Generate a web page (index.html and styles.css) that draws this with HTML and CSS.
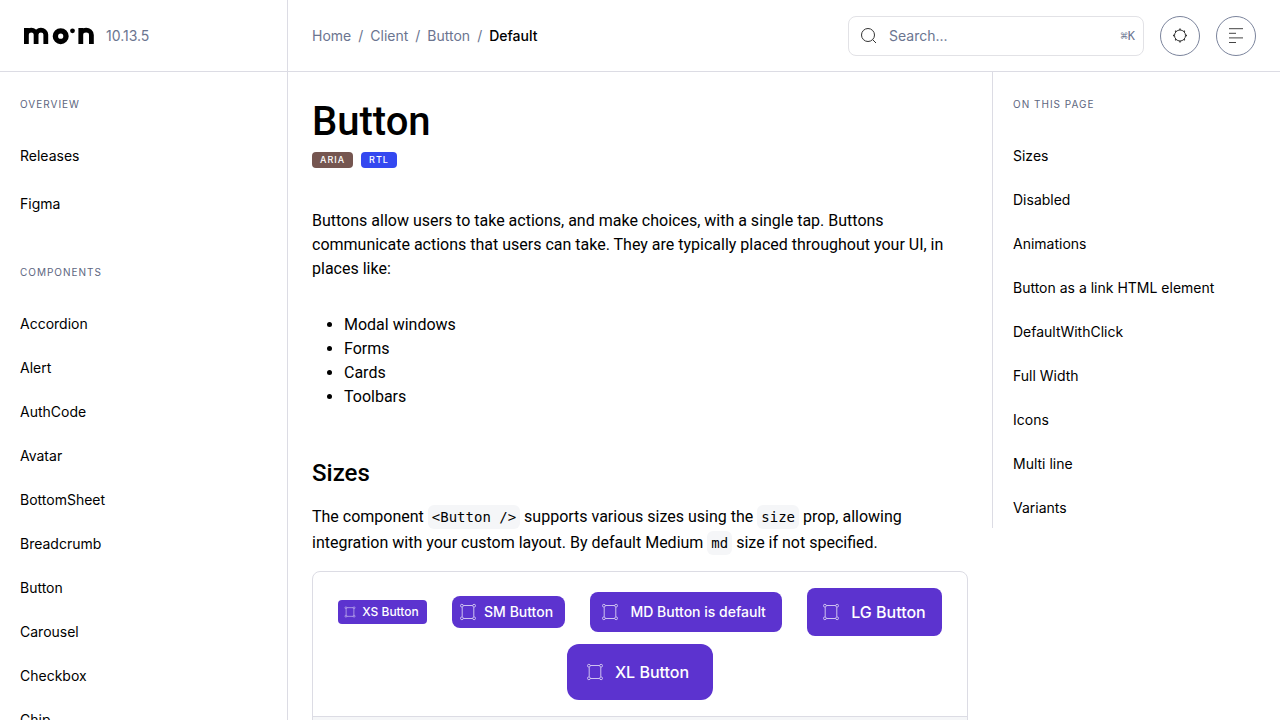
FILE: index.html
```html
<!DOCTYPE html>
<html lang="en">
<head>
<meta charset="utf-8">
<meta name="viewport" content="width=device-width, initial-scale=1">
<title>Button - Moon</title>
<link rel="stylesheet" href="styles.css">
</head>
<body>
<svg class="defs" aria-hidden="true">
  <symbol id="frame" viewBox="0 0 24 24" fill="none" stroke="currentColor">
    <path d="M7.200 5.500h9.600M7.200 18.500h9.600M6.200 7.200v9.600M17.800 7.200v9.600"/>
    <circle cx="5.900" cy="5.700" r="1.400"/><circle cx="18.100" cy="5.700" r="1.400"/>
    <circle cx="5.900" cy="18.300" r="1.400"/><circle cx="18.100" cy="18.300" r="1.400"/>
  </symbol>
</svg>
<div class="layout">
  <aside class="sidebar">
    <div class="brand">
      <svg class="logo" viewBox="0 0 70 18" role="img" aria-label="moon">
        <g fill="none" stroke="#000" stroke-width="4.800">
          <path d="M2.400 17V1M2.400 17V7.500a4.850 4.300 0 0 1 9.700 0V17M12.100 17V7.500a4.850 4.300 0 0 1 9.700 0V17"/>
          <circle cx="36.700" cy="9.200" r="5.300" stroke-width="5.400"/>
          <path d="M56.800 17V1M56.800 17V8a5.300 4.800 0 0 1 10.600 0V17"/>
        </g>
        <circle cx="48.500" cy="3.800" r="2.400"/>
      </svg>
      <span class="version">10.13.5</span>
    </div>
    <nav class="side-nav" aria-label="Components">
      <h2 class="label">Overview</h2>
      <ul class="links roomy">
        <li><a href="#">Releases</a></li>
        <li><a href="#">Figma</a></li>
      </ul>
      <h2 class="label">Components</h2>
      <ul class="links">
        <li><a href="#">Accordion</a></li>
        <li><a href="#">Alert</a></li>
        <li><a href="#">AuthCode</a></li>
        <li><a href="#">Avatar</a></li>
        <li><a href="#">BottomSheet</a></li>
        <li><a href="#">Breadcrumb</a></li>
        <li><a href="#">Button</a></li>
        <li><a href="#">Carousel</a></li>
        <li><a href="#">Checkbox</a></li>
        <li><a href="#">Chip</a></li>
      </ul>
    </nav>
  </aside>
  <div class="page">
    <header class="topbar">
      <nav class="crumbs" aria-label="Breadcrumb">
        <a href="#">Home</a><span>/</span><a href="#">Client</a><span>/</span><a href="#">Button</a><span>/</span><strong>Default</strong>
      </nav>
      <div class="tools">
        <label class="search">
          <svg viewBox="0 0 24 24" width="24" height="24" fill="none" stroke="#333" aria-hidden="true"><circle cx="11" cy="11" r="6.500"/><path d="M15.700 15.700l3.300 3.300"/></svg>
          <input type="search" placeholder="Search..." aria-label="Search">
          <kbd>⌘K</kbd>
        </label>
        <button class="round" type="button" aria-label="Switch theme">
          <svg viewBox="0 0 24 24" width="24" height="24" fill="none" stroke="#333" aria-hidden="true"><circle cx="12" cy="11.500" r="5.500"/><path stroke-width="1.400" d="M12 4.500V6M12 17v1.500M5 11.500h1.500M17.500 11.500H19M7.200 6.700l1 1M15.800 15.300l1 1M7.200 16.300l1-1M15.800 7.700l1-1"/></svg>
        </button>
        <button class="round" type="button" aria-label="Switch direction">
          <svg viewBox="0 0 24 24" width="24" height="24" fill="none" stroke="#444" aria-hidden="true"><path d="M5 4.700h14M5 9.300h7M5 13.900h14M5 18.500h7"/></svg>
        </button>
      </div>
    </header>
    <div class="columns">
      <main class="content">
        <h1>Button</h1>
        <div class="tags"><span class="tag brown">Aria</span><span class="tag blue">RTL</span></div>
        <p class="intro">Buttons allow users to take actions, and make choices, with a single tap. Buttons communicate actions that users can take. They are typically placed throughout your UI, in places like:</p>
        <ul class="bullets">
          <li>Modal windows</li>
          <li>Forms</li>
          <li>Cards</li>
          <li>Toolbars</li>
        </ul>
        <h2 class="section">Sizes</h2>
        <p class="text">The component <code>&lt;Button /&gt;</code> supports various sizes using the <code>size</code> prop, allowing integration with your custom layout. By default Medium <code>md</code> size if not specified.</p>
        <div class="card">
          <div class="demo">
            <button type="button" class="btn xs"><svg><use href="#frame"/></svg>XS Button</button>
            <button type="button" class="btn sm"><svg><use href="#frame"/></svg>SM Button</button>
            <button type="button" class="btn md"><svg><use href="#frame"/></svg>MD Button is default</button>
            <button type="button" class="btn lg"><svg><use href="#frame"/></svg>LG Button</button>
            <button type="button" class="btn xl"><svg><use href="#frame"/></svg>XL Button</button>
          </div>
          <div class="card-foot"></div>
        </div>
      </main>
      <aside class="toc">
        <h2 class="label">On this page</h2>
        <ul class="links">
          <li><a href="#">Sizes</a></li>
          <li><a href="#">Disabled</a></li>
          <li><a href="#">Animations</a></li>
          <li><a href="#">Button as a link HTML element</a></li>
          <li><a href="#">DefaultWithClick</a></li>
          <li><a href="#">Full Width</a></li>
          <li><a href="#">Icons</a></li>
          <li><a href="#">Multi line</a></li>
          <li><a href="#">Variants</a></li>
        </ul>
      </aside>
    </div>
  </div>
</div>
</body>
</html>
```

FILE: styles.css
```css
* { box-sizing: border-box; margin: 0; padding: 0; }
html { scrollbar-width: none; }
body { font-family: Inter, "Liberation Sans", sans-serif; font-size: 16px; line-height: 24px; color: #000; background: #fff; }
a { color: inherit; text-decoration: none; }
ul { list-style: none; }
button { font: inherit; cursor: pointer; }
.defs { display: none; }

.layout { display: flex; align-items: flex-start; }
.sidebar { position: sticky; top: 0; width: 288px; height: 100vh; flex: none; overflow-y: auto; scrollbar-width: none; border-right: 1px solid #dcdce4; }
.brand { display: flex; align-items: center; gap: 12px; height: 72px; padding: 0 24px; border-bottom: 1px solid #dcdce4; }
.logo { width: 70px; height: 18px; }
.version { font-size: 14px; color: #6b7590; }

.side-nav { padding: 20px 20px 0; }
.label { font-size: 10px; line-height: 24px; font-weight: 400; letter-spacing: 1px; text-transform: uppercase; color: #5d6680; }
.links { display: flex; flex-direction: column; gap: 4px; padding-top: 20px; }
.links a { display: block; padding: 8px 0; font-size: 14px; }
.roomy { gap: 0; padding: 16px 0 32px; }
.roomy a { padding: 12px 0; }

.page { flex: 1; min-width: 0; }
.topbar { display: flex; align-items: center; justify-content: space-between; height: 72px; padding: 0 24px; border-bottom: 1px solid #dcdce4; }
.crumbs { display: flex; gap: 7px; font-size: 14px; color: #6b7590; }
.crumbs strong { font-weight: 500; color: #000; }
.tools { display: flex; align-items: center; gap: 16px; }
.search { display: flex; align-items: center; gap: 8px; width: 296px; height: 40px; padding: 0 8px; border: 1px solid #e2e2e6; border-radius: 8px; }
.search input { flex: 1; min-width: 0; border: 0; outline: 0; background: none; font: inherit; font-size: 14px; }
.search input::placeholder { color: #6b7590; opacity: 1; }
.search kbd { font-family: "DejaVu Sans Mono", monospace; font-size: 12px; color: #6b7590; }
.round { display: flex; align-items: center; justify-content: center; width: 40px; height: 40px; border: 1px solid #7b849c; border-radius: 50%; background: none; }

.columns { display: flex; align-items: flex-start; }
.content { flex: 1; min-width: 0; padding: 20px 24px; font-family: Roboto, "Liberation Sans", sans-serif; }
h1 { font-size: 40px; line-height: 60px; font-weight: 500; }
.tags { display: flex; gap: 8px; font-family: Inter, "Liberation Sans", sans-serif; }
.tag { padding: 0 8px; border-radius: 4px; font-size: 9px; line-height: 16px; font-weight: 500; letter-spacing: 1px; text-transform: uppercase; color: #fff; }
.brown { background: #755650; }
.blue { background: #3448f0; }
.intro { padding-top: 41px; }
.bullets { padding: 32px 0 0 32px; list-style: disc; }
.section { padding-top: 48px; font-size: 24px; line-height: 32px; font-weight: 500; }
.text { padding-top: 15px; line-height: 26px; }
code { padding: 4px; border-radius: 6px; background: #f5f6f8; font-family: "DejaVu Sans Mono", monospace; font-size: 14px; line-height: 16px; }

.card { margin-top: 15px; overflow: hidden; border: 1px solid #dcdce4; border-radius: 8px; }
.demo { display: flex; flex-wrap: wrap; align-items: center; justify-content: space-evenly; row-gap: 8px; padding: 16px 0; }
.card-foot { height: 48px; border-top: 1px solid #dcdce4; background: #f5f6f8; }
.btn { display: flex; align-items: center; border: 0; border-radius: 8px; background: #5c33cf; color: #fff; font-family: Inter, "Liberation Sans", sans-serif; font-weight: 500; white-space: nowrap; }
.btn svg { width: 24px; height: 24px; opacity: .7; }
.xs { height: 24px; padding: 0 8px 0 4px; gap: 4px; border-radius: 4px; font-size: 12px; }
.xs svg { width: 16px; height: 16px; }
.sm { height: 32px; padding: 0 12px 0 4px; gap: 4px; font-size: 14px; }
.md { height: 40px; padding: 0 16px 0 8px; gap: 8px; font-size: 14px; }
.lg { height: 48px; padding: 0 16px 0 12px; gap: 8px; }
.xl { height: 56px; padding: 0 24px 0 16px; gap: 8px; border-radius: 12px; }

.toc { width: 288px; flex: none; padding: 20px 20px 0; border-left: 1px solid #dcdce4; }
```
